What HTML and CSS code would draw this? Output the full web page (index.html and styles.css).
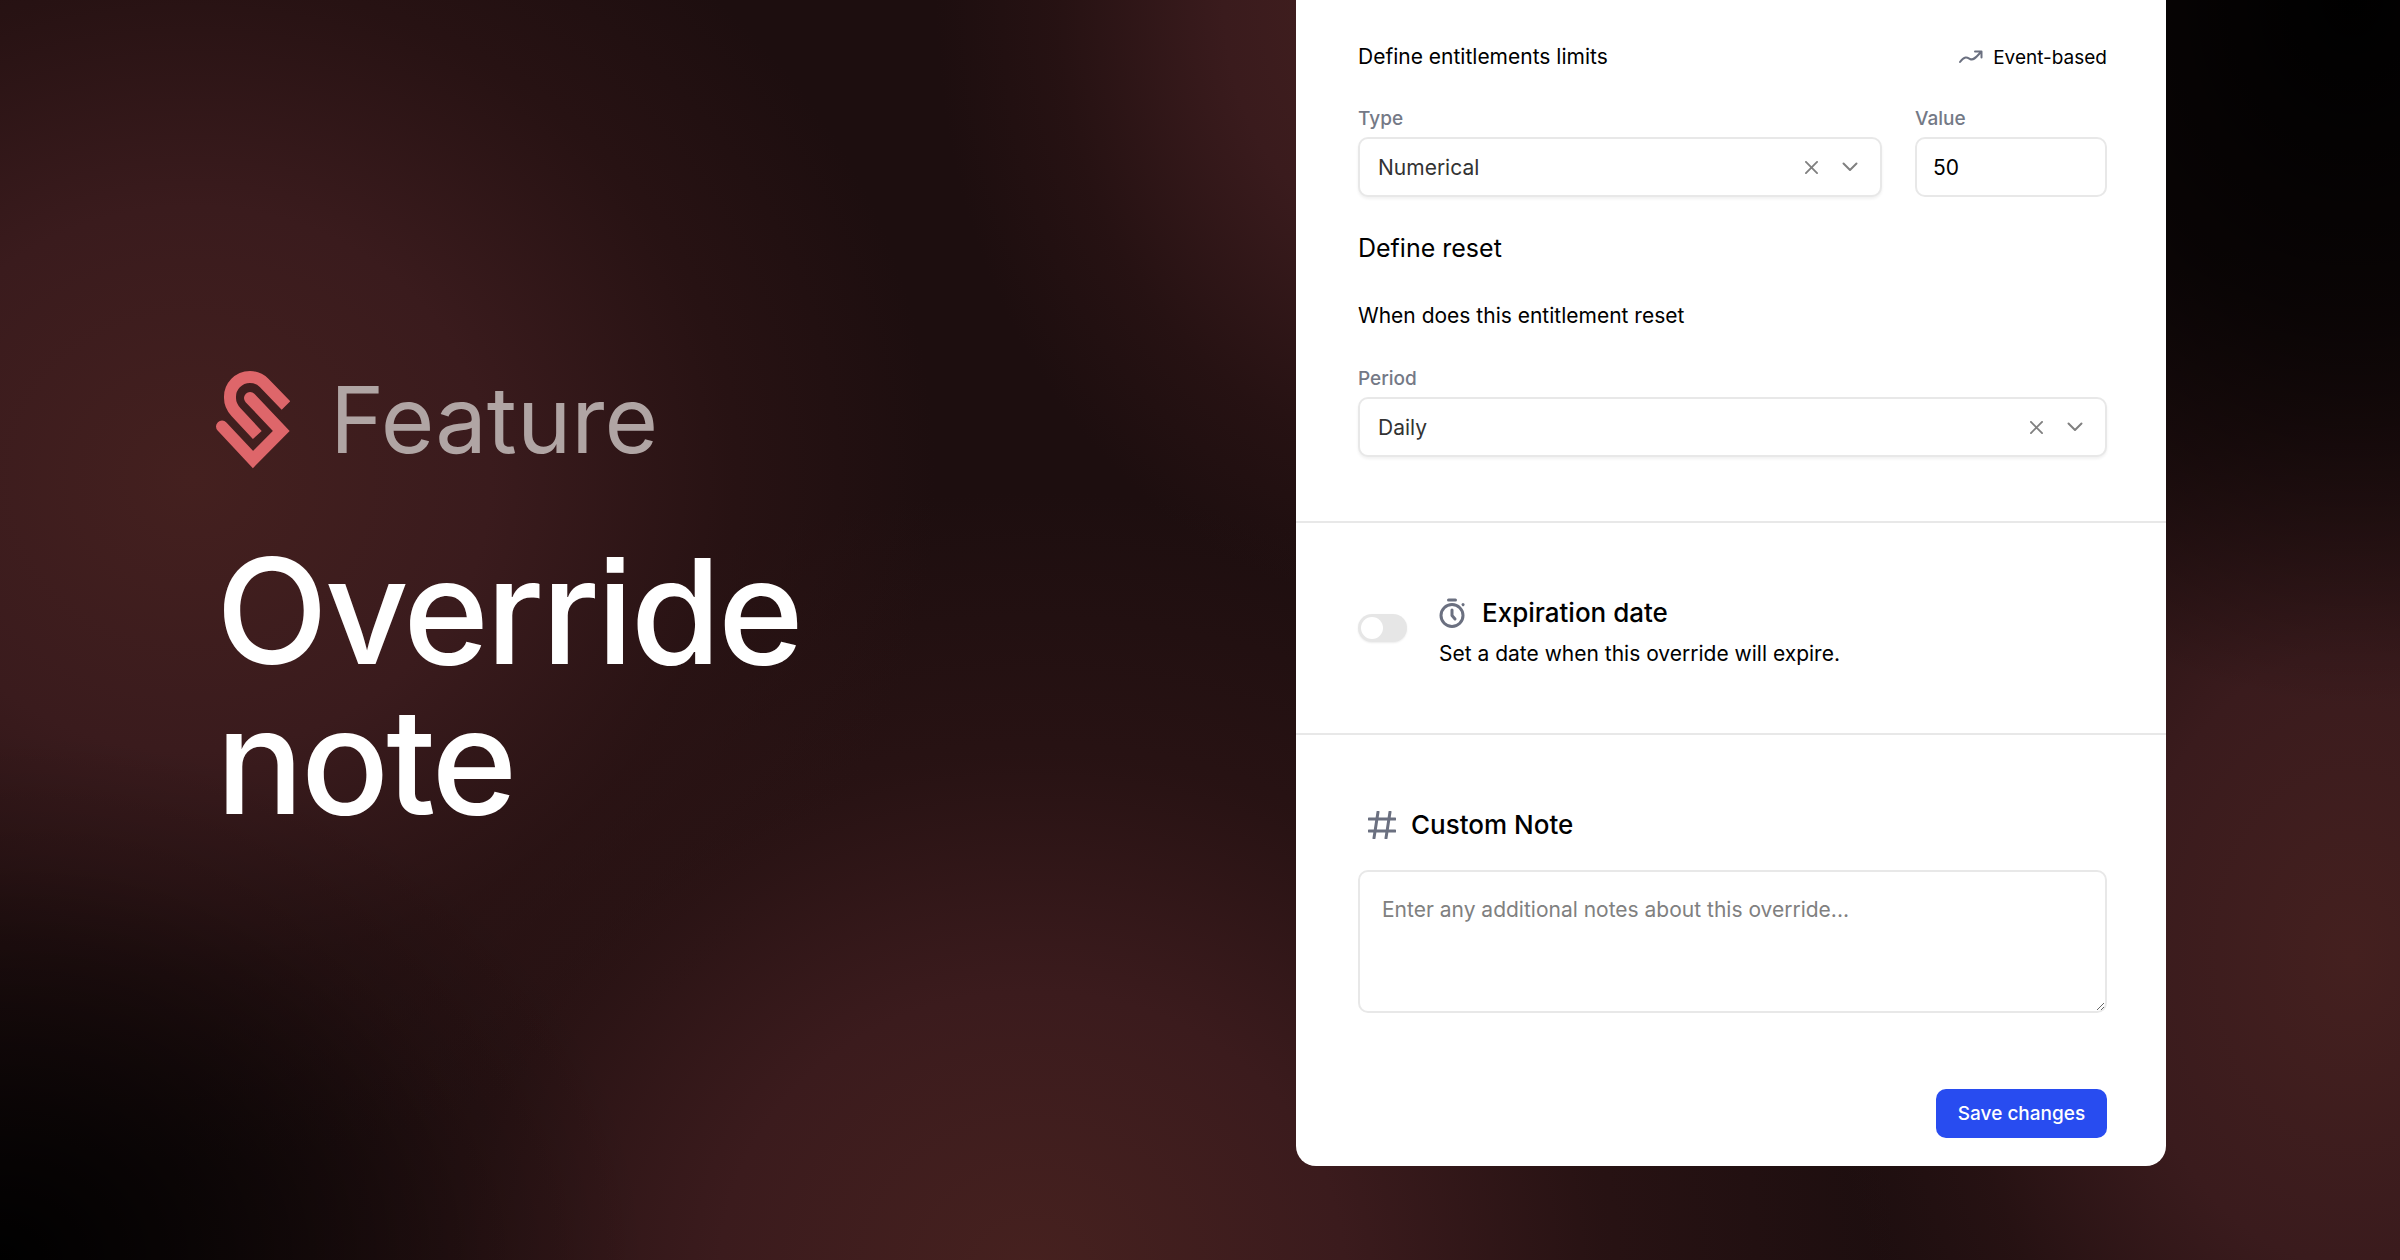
FILE: index.html
```html
<!DOCTYPE html>
<html lang="en">
<head>
  <meta charset="utf-8">
  <title>Override note</title>
  <link rel="stylesheet" href="styles.css">
</head>
<body>
<main class="page">
  <section class="intro">
    <div class="kicker">
      <svg class="logo" viewBox="0 0 74 98" aria-hidden="true">
        <path class="hook" d="M70 34.500 L48.100 11.900 A20 20 0 0 0 34 6 A20 20 0 0 0 14 27 Q14 34.500 19.900 41 L41.300 64"/>
        <path d="M34 27 L65.300 60 L37 88.500 L6 55.500"/>
      </svg>
      <span>Feature</span>
    </div>
    <h1>Override<br>note</h1>
  </section>

  <form class="card">
    <section class="limits">
      <div class="row between">
        <p class="text">Define entitlements limits</p>
        <span class="badge">
          <svg class="trend" viewBox="0 0 24 16" aria-hidden="true"><path d="M1 13 C6 6 9 9 11 10 C15 12 18 7 22 3 M16 2.500 H22.500 V8.500"/></svg>
          Event-based
        </span>
      </div>

      <div class="fields">
        <div class="field">
          <label for="type">Type</label>
          <div class="select">
            <select id="type"><option>Numerical</option><option>Boolean</option></select>
            <div class="select-icons">
              <button type="button" class="clear" aria-label="Clear type"><svg viewBox="0 0 14 14"><path d="M1 1 L13 13 M13 1 L1 13"/></svg></button>
              <svg class="chevron" viewBox="0 0 16 10" aria-hidden="true"><path d="M1.500 1.500 L8 8 L14.500 1.500"/></svg>
            </div>
          </div>
        </div>
        <div class="field">
          <label for="value">Value</label>
          <input id="value" class="box" type="text" value="50">
        </div>
      </div>

      <h2>Define reset</h2>
      <p class="text">When does this entitlement reset</p>

      <div class="field period">
        <label for="period">Period</label>
        <div class="select">
          <select id="period"><option>Daily</option><option>Monthly</option></select>
          <div class="select-icons">
            <button type="button" class="clear" aria-label="Clear period"><svg viewBox="0 0 14 14"><path d="M1 1 L13 13 M13 1 L1 13"/></svg></button>
            <svg class="chevron" viewBox="0 0 16 10" aria-hidden="true"><path d="M1.500 1.500 L8 8 L14.500 1.500"/></svg>
          </div>
        </div>
      </div>
    </section>

    <section class="expiration">
      <input id="expires" class="toggle" type="checkbox">
      <div>
        <label class="heading" for="expires">
          <svg class="timer" viewBox="0 0 28 30" aria-hidden="true">
            <circle cx="13" cy="17.500" r="11"/><path d="M9.500 2 H16.500 M13 12 V17.500 L16 21 M24 6.500 L24.100 6.600"/>
          </svg>
          Expiration date
        </label>
        <p class="text">Set a date when this override will expire.</p>
      </div>
    </section>

    <section class="note">
      <label class="heading" for="note">
        <svg class="hash" viewBox="0 0 28 28" aria-hidden="true"><path d="M1 8 H27 M1 20 H27 M10 1 L6 27 M22 1 L18 27"/></svg>
        Custom Note
      </label>
      <textarea id="note" placeholder="Enter any additional notes about this override..."></textarea>
      <button type="button" class="save">Save changes</button>
    </section>
  </form>
</main>
</body>
</html>
```

FILE: styles.css
```css
* {
  box-sizing: border-box;
}

body {
  margin: 0;
  font-family: Inter, "Liberation Sans", sans-serif;
  color: #000;
}

h1, h2, p {
  margin: 0;
}

.page {
  display: grid;
  grid-template-columns: 54% 36.25%;
  align-items: start;
  min-height: 100vh;
  background:
    radial-gradient(ellipse 27% 42% at 0% 100%, #000 0%, rgba(0, 0, 0, 0.5) 45%, rgba(0, 0, 0, 0.15) 75%, transparent 100%),
    radial-gradient(ellipse 24% 56% at 98% 0%, #000 0%, rgba(0, 0, 0, 0.7) 45%, transparent 100%),
    radial-gradient(ellipse 31% 54% at 8% 38%, #44201f 0%, #3a1b1d 40%, rgba(44, 20, 21, 0.7) 72%, transparent 100%),
    radial-gradient(ellipse 36% 62% at 43% 101%, #46211f 0%, #3b1b1d 36%, rgba(44, 20, 21, 0.7) 66%, transparent 100%),
    radial-gradient(ellipse 22% 58% at 98% 76%, #44201f 0%, #3a1b1d 42%, rgba(44, 20, 21, 0.6) 75%, transparent 100%),
    radial-gradient(ellipse 20% 48% at 59% 0%, #44201f 0%, #3a1b1d 40%, rgba(44, 20, 21, 0.6) 75%, transparent 100%),
    #1d0e0f;
}

/* left side */
.intro {
  align-self: center;
  padding-left: 216px;
  padding-bottom: 61px;
}

.kicker {
  display: flex;
  align-items: center;
  gap: 40px;
  margin-bottom: 60px;
  font-size: 92px;
  font-weight: 400;
  line-height: 112px;
  color: #b0a5a4;
}

h1 {
  color: #fff;
  font-size: 146px;
  font-weight: 500;
  line-height: 150px;
  letter-spacing: -0.02em;
  font-feature-settings: "ss07";
}

/* card */
.card {
  background: #fff;
  border-radius: 0 0 20px 20px;
}

.card section {
  padding: 0 59px 0 62px;
}

.card section + section {
  border-top: 2px solid #e8e8e8;
}

.text {
  font-size: 21px;
  line-height: 32px;
}

.row {
  display: flex;
  align-items: center;
}

.between {
  justify-content: space-between;
}

.card .limits {
  padding-top: 41px;
  padding-bottom: 64px;
}

.badge {
  display: flex;
  align-items: center;
  gap: 10px;
  font-size: 19px;
}

svg {
  flex: none;
  fill: none;
  stroke: #6b7080;
  stroke-width: 2;
  stroke-linecap: round;
  stroke-linejoin: round;
}

.logo {
  width: 74px;
  height: 98px;
  stroke: #de666a;
  stroke-width: 12;
  stroke-linejoin: miter;
}

.hook {
  stroke-linecap: butt;
}

.trend {
  width: 24px;
  height: 16px;
}

.fields {
  display: grid;
  grid-template-columns: 1fr 192px;
  gap: 33px;
  margin: 32px 0 33px;
}

.field label {
  display: block;
  margin-bottom: 4px;
  font-size: 19px;
  font-weight: 500;
  line-height: 28px;
  color: #747986;
}

.select {
  display: grid;
}

.select > * {
  grid-area: 1 / 1;
}

.select select,
.box {
  width: 100%;
  height: 60px;
  border: 2px solid #e8e8e8;
  border-radius: 10px;
  background: #fff;
  font: 21px Inter, "Liberation Sans", sans-serif;
}

.select select {
  appearance: none;
  padding: 0 18px;
  color: #333;
  box-shadow: 0 2px 3px rgba(0, 0, 0, 0.06);
}

.box {
  padding: 0 16px;
}

.select-icons {
  display: flex;
  align-items: center;
  justify-self: end;
  gap: 24px;
  padding-right: 24px;
  pointer-events: none;
}

.select-icons svg {
  display: block;
  stroke: #808080;
}

.clear {
  padding: 0;
  border: 0;
  background: none;
  pointer-events: auto;
}

.clear svg {
  width: 13px;
  height: 13px;
}

.chevron {
  width: 16px;
  height: 10px;
}

h2 {
  margin-bottom: 34px;
  font-size: 25px;
  font-weight: 400;
  line-height: 36px;
}

.period {
  margin-top: 33px;
}

.card .expiration {
  display: flex;
  align-items: flex-start;
  gap: 32px;
  padding-top: 70px;
  padding-bottom: 63px;
}

.toggle {
  appearance: none;
  width: 49px;
  height: 28px;
  margin: 21px 0 0;
  padding: 3px;
  border-radius: 14px;
  background: #e6e6e6;
  box-shadow: 0 1px 2px rgba(0, 0, 0, 0.08);
}

.toggle::before {
  content: "";
  display: block;
  width: 22px;
  height: 22px;
  border-radius: 50%;
  background: #fff;
}

.toggle:checked {
  background: #284cf0;
}

.toggle:checked::before {
  margin-left: 21px;
}

.heading {
  display: flex;
  align-items: center;
  gap: 15px;
  font-size: 26px;
  font-weight: 500;
  line-height: 40px;
}

.expiration .heading {
  margin-bottom: 5px;
}

.timer {
  width: 28px;
  height: 30px;
  stroke-width: 3;
}

.hash {
  width: 28px;
  height: 28px;
  stroke-width: 3;
}

.card .note {
  display: flex;
  flex-direction: column;
  padding-top: 70px;
  padding-bottom: 28px;
}

.note .heading {
  padding-left: 10px;
}

textarea {
  height: 143px;
  margin: 25px 0 76px;
  padding: 22px;
  border: 2px solid #e8e8e8;
  border-radius: 10px;
  font: 21px/32px Inter, "Liberation Sans", sans-serif;
  resize: vertical;
}

textarea::placeholder {
  color: #808080;
}

.save {
  align-self: flex-end;
  width: 171px;
  height: 49px;
  border: 0;
  border-radius: 10px;
  background: #284cf0;
  color: #fff;
  font: 500 19px Inter, "Liberation Sans", sans-serif;
}
```
